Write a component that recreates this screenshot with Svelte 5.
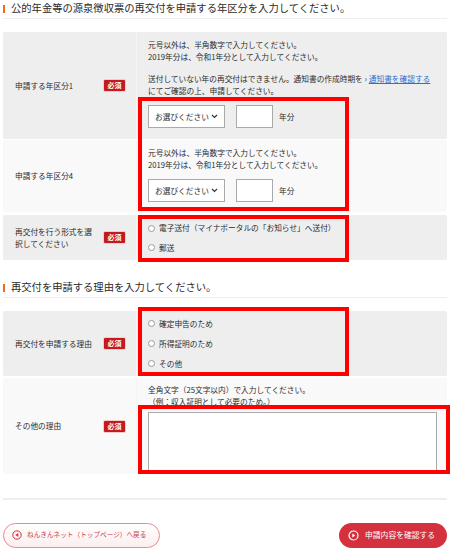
<script>
  const notes = ['元号以外は、半角数字で入力してください。', '2019年分は、令和1年分として入力してください。'];
</script>

{#snippet badge()}<span class="badge">必須</span>{/snippet}

{#snippet yearPicker()}
  <div class="picker">
    <div class="select"><span>お選びください</span>
      <svg width="7" height="5" viewBox="0 0 7 5"><path d="M1 1l2.500 2.500L6 1" fill="none" stroke="#333" stroke-width="1.200"/></svg>
    </div>
    <input class="year" type="text" />
    <span>年分</span>
  </div>
{/snippet}

{#snippet radio(label)}
  <label class="radio"><span class="dot"></span>{label}</label>
{/snippet}

<main>
  <h2 class="first">公的年金等の源泉徴収票の再交付を申請する年区分を入力してください。</h2>

  <section class="table">
    <div class="row grey r1">
      <div class="label"><span>申請する年区分1</span>{@render badge()}</div>
      <div class="body">
        <p>{notes[0]}<br />{notes[1]}</p>
        <p class="gap">送付していない年の再交付はできません。通知書の作成時期を <span class="chev">›</span> <a href="#top">通知書を確認する</a><br />にてご確認の上、申請してください。</p>
        {@render yearPicker()}
      </div>
    </div>
    <div class="row light r2">
      <div class="label"><span>申請する年区分4</span></div>
      <div class="body">
        <p>{notes[0]}<br />{notes[1]}</p>
        {@render yearPicker()}
      </div>
    </div>
    <div class="row grey r3">
      <div class="label"><span>再交付を行う形式を選択してください</span>{@render badge()}</div>
      <div class="body radios">
        {@render radio('電子送付（マイナポータルの「お知らせ」へ送付）')}
        {@render radio('郵送')}
      </div>
    </div>
  </section>

  <h2 class="second">再交付を申請する理由を入力してください。</h2>

  <section class="table">
    <div class="row grey r4">
      <div class="label"><span>再交付を申請する理由</span>{@render badge()}</div>
      <div class="body radios">
        {@render radio('確定申告のため')}
        {@render radio('所得証明のため')}
        {@render radio('その他')}
      </div>
    </div>
    <div class="row light r5">
      <div class="label"><span>その他の理由</span>{@render badge()}</div>
      <div class="body">
        <p>全角文字（25文字以内）で入力してください。<br />（例：収入証明として必要のため。）</p>
        <div class="textarea"></div>
      </div>
    </div>
  </section>

  <hr />

  <nav class="actions">
    <button class="back">
      <svg width="10" height="10" viewBox="0 0 10 10"><circle cx="5" cy="5" r="4.200" fill="none" stroke="#d5303e" stroke-width="1"/><path d="M6.300 3v4L3.300 5z" fill="#d5303e"/></svg>
      ねんきんネット（トップページ）へ戻る
    </button>
    <button class="next">
      <svg width="11" height="11" viewBox="0 0 11 11"><circle cx="5.500" cy="5.500" r="4.500" fill="none" stroke="#fff" stroke-width="1.200"/><path d="M4.300 3.500v4l2.900-2z" fill="#fff"/></svg>
      申請内容を確認する
    </button>
  </nav>

  <div class="mark m1"></div>
  <div class="mark m2"></div>
  <div class="mark m3"></div>
  <div class="mark m4"></div>
</main>

<style>
  :global(body) { margin: 0; background: #fff; }
  main {
    position: relative;
    width: 450px;
    height: 548px;
    overflow: hidden;
    padding: 0 3px;
    box-sizing: border-box;
    font-family: "Noto Sans CJK JP", "Noto Sans", sans-serif;
    font-size: 7.7px;
    line-height: 11.7px;
    color: #2b2b2b;
  }
  h2 {
    margin: 0;
    font-size: 10.3px;
    font-weight: 400;
    line-height: 12px;
    padding: 0 0 4px 8px;
    border-bottom: 1px solid #eee;
    position: relative;
  }
  h2::before {
    content: "";
    position: absolute;
    left: 0;
    top: 3px;
    width: 2px;
    height: 8px;
    background: #ee6a1f;
  }
  h2.first { margin-top: 2px; height: 12px; }
  h2.second { margin-top: 21px; height: 12px; }
  .table { margin-top: 13px; display: flex; flex-direction: column; gap: 2px; }
  .row { display: flex; border-radius: 2px; }
  .grey { background: #eeeeee; }
  .light { background: #f9f9f9; }
  .r1 { height: 107px; }
  .r2 { height: 72px; margin-top: -1px; }
  .r3 { height: 45px; margin-top: 1px; }
  .r4 { height: 65px; }
  .r5 { height: 96px; }
  .label {
    width: 134px;
    box-sizing: border-box;
    padding: 0 11px 0 12px;
    display: flex;
    align-items: center;
    justify-content: space-between;
    gap: 12px;
    border-right: 1px solid #f4f4f4;
  }
  .label span:first-child { flex: 1; }
  .badge {
    flex: none;
    width: 21px;
    height: 11px;
    line-height: 11px;
    text-align: center;
    background: #c41a1f;
    color: #fff;
    font-size: 7px;
    font-weight: 700;
    border-radius: 1px;
    box-shadow: 0 0 0 1px #f3c9c9;
  }
  .body { flex: 1; padding: 7px 10px 0 11px; min-width: 0; }
  .r2 .body { padding-top: 7px; }
  .r5 .body { padding-top: 6px; }
  p { margin: 0; white-space: nowrap; }
  .gap { margin-top: 10.500px; }
  a { color: #2f6fd0; text-decoration: underline; }
  .chev { color: #2f6fd0; font-weight: 700; }
  .picker { display: flex; align-items: center; margin-top: 9px; }
  .r2 .picker { margin-top: 9px; }
  .select {
    width: 77px;
    height: 23px;
    box-sizing: border-box;
    border: 1px solid #aaa;
    background: #fff;
    display: flex;
    align-items: center;
    justify-content: space-between;
    padding: 0 6px 0 6px;
  }
  .year {
    width: 37px;
    height: 23px;
    box-sizing: border-box;
    border: 1px solid #aaa;
    background: #fff;
    margin: 0 6px 0 11px;
    padding: 0;
  }
  .radios { display: flex; flex-direction: column; justify-content: center; gap: 8.200px; padding-top: 1px; }
  .r4 .radios { padding-top: 0; }
  .radio { display: flex; align-items: center; gap: 4px; white-space: nowrap; }
  .dot {
    width: 7px;
    height: 7px;
    box-sizing: border-box;
    border: 1px solid #999;
    border-radius: 50%;
    background: #fff;
    flex: none;
  }
  .textarea {
    height: 60px;
    margin-top: 5px;
    box-sizing: border-box;
    border: 1px solid #aaa;
    background: #fff;
  }
  hr { margin: 24px 0 0; border: 0; height: 1.500px; background: #eee; }
  .actions { display: flex; justify-content: space-between; margin-top: 23px; }
  button {
    height: 25px;
    border-radius: 13px;
    font: inherit;
    display: flex;
    align-items: center;
    gap: 6px;
    padding: 0;
    box-sizing: border-box;
  }
  .back {
    width: 157px;
    padding-left: 8px;
    font-size: 6.650px;
    gap: 5px;
    color: #c9404c;
    border: 1px solid #e58b93;
    background: linear-gradient(#fff, #fbeeee);
  }
  .next {
    width: 108px;
    padding-left: 9px;
    color: #fff;
    border: 0;
    background: #d5303e;
    font-size: 7.800px;
  }
  .mark { position: absolute; border: 4px solid #fe0000; box-sizing: border-box; }
  .m1 { left: 138px; top: 97px; width: 211px; height: 114px; }
  .m2 { left: 138px; top: 215px; width: 211px; height: 47px; }
  .m3 { left: 138px; top: 307px; width: 211px; height: 69px; }
  .m4 { left: 138px; top: 405px; width: 312px; height: 69px; }
</style>
